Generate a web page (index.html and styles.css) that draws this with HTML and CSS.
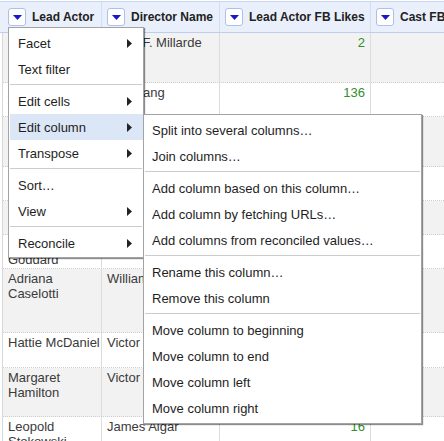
FILE: index.html
```html
<!DOCTYPE html>
<html>
<head>
<meta charset="utf-8">
<link rel="stylesheet" href="styles.css">
</head>
<body>
<div class="page">
  <div class="table">
    <div class="row head">
      <div class="hcell"><span class="dd"><svg width="9" height="5" viewBox="0 0 9 5"><path d="M0 0H9L4.5 5Z"/></svg></span><span class="htext">Lead Actor</span></div>
      <div class="hcell"><span class="dd"><svg width="9" height="5" viewBox="0 0 9 5"><path d="M0 0H9L4.5 5Z"/></svg></span><span class="htext">Director Name</span></div>
      <div class="hcell"><span class="dd"><svg width="9" height="5" viewBox="0 0 9 5"><path d="M0 0H9L4.5 5Z"/></svg></span><span class="htext">Lead Actor FB Likes</span></div>
      <div class="hcell last"><span class="dd"><svg width="9" height="5" viewBox="0 0 9 5"><path d="M0 0H9L4.5 5Z"/></svg></span><span class="htext">Cast FB Likes</span></div>
    </div>
    <div class="row odd h50"><div class="cell">Lillian Gish</div><div class="cell">Harry F. Millarde</div><div class="cell num">2</div><div class="cell"></div></div>
    <div class="row h34"><div class="cell">Anna May Wong</div><div class="cell">Fritz Lang</div><div class="cell num">136</div><div class="cell"></div></div>
    <div class="row odd h50"><div class="cell">Greta Garbo</div><div class="cell">Clarence Brown</div><div class="cell num"></div><div class="cell"></div></div>
    <div class="row h34"><div class="cell">Bette Davis</div><div class="cell">William Wyler</div><div class="cell num"></div><div class="cell"></div></div>
    <div class="row odd h34"><div class="cell">Vivien Leigh</div><div class="cell">Victor Fleming</div><div class="cell num"></div><div class="cell"></div></div>
    <div class="row h34"><div class="cell">Paulette Goddard</div><div class="cell">Charles Chaplin</div><div class="cell num"></div><div class="cell"></div></div>
    <div class="row odd h64"><div class="cell">Adriana Caselotti</div><div class="cell">William Cottrell</div><div class="cell num"></div><div class="cell"></div></div>
    <div class="row h35"><div class="cell">Hattie McDaniel</div><div class="cell">Victor Fleming</div><div class="cell num"></div><div class="cell"></div></div>
    <div class="row odd h49"><div class="cell">Margaret Hamilton</div><div class="cell">Victor Fleming</div><div class="cell num"></div><div class="cell"></div></div>
    <div class="row h50"><div class="cell">Leopold Stokowski</div><div class="cell">James Algar</div><div class="cell num">16</div><div class="cell"></div></div>
  </div>

  <div class="menu main-menu">
    <div class="item">Facet<svg class="arrow" width="5" height="9" viewBox="0 0 5 9"><path d="M0 0L5 4.5L0 9Z"/></svg></div>
    <div class="item">Text filter</div>
    <div class="sep"></div>
    <div class="item">Edit cells<svg class="arrow" width="5" height="9" viewBox="0 0 5 9"><path d="M0 0L5 4.5L0 9Z"/></svg></div>
    <div class="item active">Edit column<svg class="arrow" width="5" height="9" viewBox="0 0 5 9"><path d="M0 0L5 4.5L0 9Z"/></svg></div>
    <div class="item">Transpose<svg class="arrow" width="5" height="9" viewBox="0 0 5 9"><path d="M0 0L5 4.5L0 9Z"/></svg></div>
    <div class="sep"></div>
    <div class="item">Sort…</div>
    <div class="item">View<svg class="arrow" width="5" height="9" viewBox="0 0 5 9"><path d="M0 0L5 4.5L0 9Z"/></svg></div>
    <div class="sep"></div>
    <div class="item">Reconcile<svg class="arrow" width="5" height="9" viewBox="0 0 5 9"><path d="M0 0L5 4.5L0 9Z"/></svg></div>
  </div>

  <div class="menu sub-menu">
    <div class="item">Split into several columns…</div>
    <div class="item">Join columns…</div>
    <div class="sep"></div>
    <div class="item">Add column based on this column…</div>
    <div class="item">Add column by fetching URLs…</div>
    <div class="item">Add columns from reconciled values…</div>
    <div class="sep"></div>
    <div class="item">Rename this column…</div>
    <div class="item">Remove this column</div>
    <div class="sep"></div>
    <div class="item">Move column to beginning</div>
    <div class="item">Move column to end</div>
    <div class="item">Move column left</div>
    <div class="item">Move column right</div>
  </div>
</div>
</body>
</html>
```

FILE: styles.css
```css
* { box-sizing: border-box; }

html, body {
  margin: 0;
  padding: 0;
  background: #fff;
  overflow: hidden;
}

body {
  font-family: "Liberation Sans", Arial, sans-serif;
  font-size: 13px;
  color: #333;
  width: 444px;
  height: 441px;
}

.page {
  position: relative;
  width: 444px;
  height: 441px;
  overflow: hidden;
}

.table {
  margin-top: 1px;
  margin-left: 2px;
  width: 600px;
  border-left: 1px solid #d8d8d8;
}

.row {
  display: grid;
  grid-template-columns: 99px 118px 151px 1fr;
  border-bottom: 1px dotted #cfcfcf;
  background: #fff;
}

.row.odd { background: #f2f2f2; }

.row.head {
  height: 32px;
  background: #eaf0fb;
  border-top: 1px solid #c9d6f2;
  border-bottom: 1px solid #bfcdf0;
  margin-left: -3px;
  padding-left: 3px;
  grid-template-columns: 99px 118px 151px 1fr;
}

.h34 { height: 34px; }
.h35 { height: 35px; }
.h49 { height: 49px; }
.h50 { height: 50px; }
.h64 { height: 64px; }

.hcell {
  display: flex;
  align-items: center;
  gap: 6px;
  padding-left: 5px;
  border-right: 1px solid #d3ddf3;
  white-space: nowrap;
  overflow: hidden;
}

.hcell.last { border-right: none; }

.dd {
  flex: none;
  width: 18px;
  height: 18px;
  border: 1px solid #aebfea;
  border-radius: 3px;
  background: #fff;
  display: flex;
  align-items: center;
  justify-content: center;
}

.dd svg { fill: #1717c9; display: block; }

.htext {
  font-weight: bold;
  font-size: 12px;
  color: #222;
}

.cell {
  padding: 2px 1px 2px 5px;
  line-height: 15px;
  border-right: 1px solid #dcdcdc;
  color: #3a3a3a;
}

.cell.num {
  text-align: right;
  padding-right: 5px;
  color: #2f8f2f;
}

.menu {
  position: absolute;
  background: #fff;
  border: 1px solid #a3a3a3;
  box-shadow: 1px 1px 1px rgba(0, 0, 0, 0.45);
  padding: 2px 0 0 1px;
  color: #1e1e1e;
}

.main-menu {
  left: 8px;
  top: 27px;
  width: 136px;
  height: 231px;
}

.sub-menu {
  left: 143px;
  top: 114px;
  width: 279px;
  height: 310px;
}

.item {
  height: 26px;
  display: flex;
  align-items: center;
  justify-content: space-between;
  padding: 0 11px 0 8px;
  white-space: nowrap;
}

.sub-menu .item { padding-left: 7px; }

.item.active { background: #dbe6f6; }

.arrow { fill: #222; display: block; }

.sep {
  height: 1px;
  background: #cccccc;
  margin: 2px 1px 3px 0;
}
```
